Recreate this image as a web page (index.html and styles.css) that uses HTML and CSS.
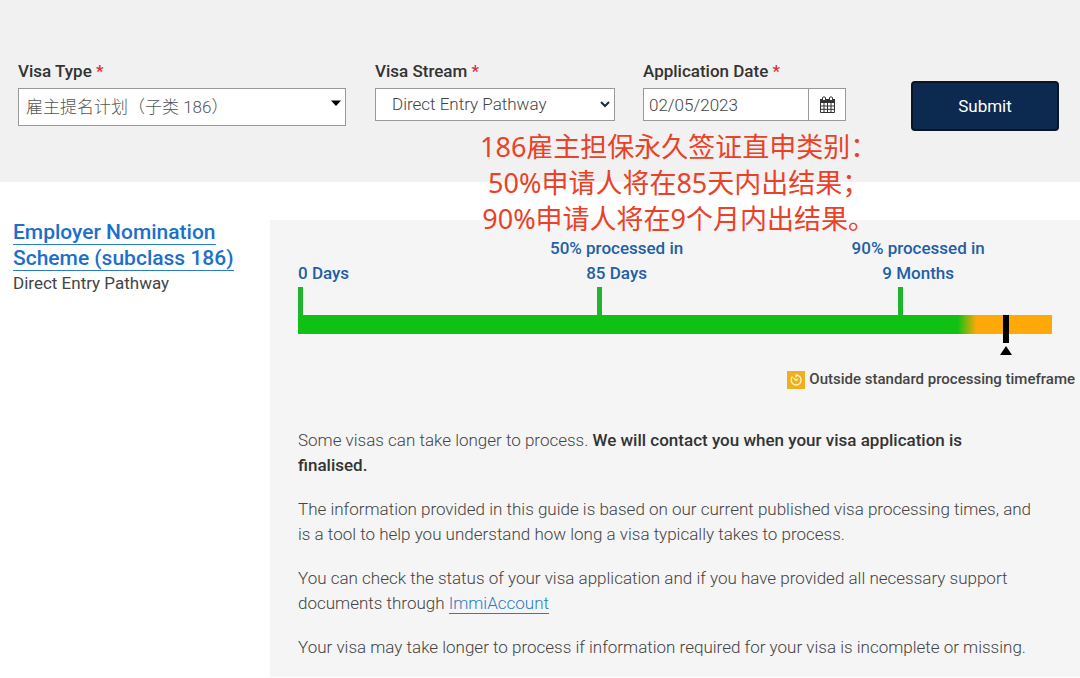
FILE: index.html
```html
<!DOCTYPE html>
<html lang="en">
<head>
  <meta charset="UTF-8" />
  <meta name="viewport" content="width=device-width, initial-scale=1.0"/>
  <title>Visa processing times</title>
  <link rel="stylesheet" href="styles.css">
</head>
<body>
  <!-- Search form -->
  <form class="search">
    <div class="field field-type">
      <label for="visaType">Visa Type <span class="required">*</span></label>
      <div class="type-box">
        <select id="visaType">
          <option>雇主提名计划（子类 186）</option>
        </select>
        <svg class="caret" viewBox="0 0 10 6" aria-hidden="true"><path d="M0 0.500h10L5 6z"/></svg>
      </div>
    </div>

    <div class="field field-stream">
      <label for="visaStream">Visa Stream <span class="required">*</span></label>
      <div class="stream-box">
        <select id="visaStream">
          <option>Direct Entry Pathway</option>
        </select>
        <svg class="chevron" viewBox="0 0 10 7" aria-hidden="true"><path d="M1 1l4 4 4-4"/></svg>
      </div>
    </div>

    <div class="field field-date">
      <label for="applicationDate">Application Date <span class="required">*</span></label>
      <div class="date-box">
        <input type="text" id="applicationDate" value="02/05/2023">
        <button type="button" class="calendar" aria-label="Choose date">
          <svg viewBox="0 0 17 18" aria-hidden="true">
            <path fill="#333" d="M1 3h15v4H1z"/>
            <path fill="none" stroke="#333" d="M1.500 3.500h14v13h-14zM5 7v9.500M8.500 7v9.500M12 7v9.500M1.500 10h14M1.500 13.300h14"/>
            <path fill="#fff" stroke="#333" d="M3.500 1.500q1.500-1.500 3 0v3h-3zM10.500 1.500q1.500-1.500 3 0v3h-3z"/>
          </svg>
        </button>
      </div>
    </div>

    <button type="submit" class="submit">Submit</button>

    <p class="note" lang="zh-CN">186雇主担保永久签证直申类别：<br>50%申请人将在85天内出结果；<br>90%申请人将在9个月内出结果。</p>
  </form>

  <!-- Result -->
  <main class="result">
    <div class="visa">
      <h2><a href="#">Employer Nomination Scheme (subclass 186)</a></h2>
      <p>Direct Entry Pathway</p>
    </div>

    <section class="panel">
      <div class="timeline">
        <div class="milestones">
          <div class="milestone start"><span class="when">0 Days</span></div>
          <div class="milestone"><span class="when">50% processed in<br>85 Days</span></div>
          <div class="milestone"><span class="when">90% processed in<br>9 Months</span></div>
        </div>
        <div class="bar">
          <div class="marker" style="left: 93.500%"></div>
        </div>
      </div>

      <div class="legend">
        <svg viewBox="0 0 18 18" aria-hidden="true">
          <path fill="#efb020" d="M0 0h18v18H0z"/>
          <path fill="none" stroke="#fff3c4" stroke-width="1.300" d="M5.500 5.500a5 5 0 1 0 3.500-1.500v2.500M6.500 7l2.500 2.500 2-1.500"/>
        </svg>
        Outside standard processing timeframe
      </div>

      <div class="info">
        <p>Some visas can take longer to process. <strong>We will contact you when your visa application is finalised.</strong></p>
        <p>The information provided in this guide is based on our current published visa processing times, and is a tool to help you understand how long a visa typically takes to process.</p>
        <p>You can check the status of your visa application and if you have provided all necessary support documents through <a href="#">ImmiAccount</a></p>
        <p>Your visa may take longer to process if information required for your visa is incomplete or missing.</p>
      </div>
    </section>
  </main>
</body>
</html>
```

FILE: styles.css
```css
* {
  box-sizing: border-box;
}

body {
  margin: 0;
  font-family: Roboto, "Noto Sans CJK SC", sans-serif;
  font-size: 17px;
  font-weight: 300;
  line-height: 25px;
  color: #444;
  background: #fff;
}

p, h2 {
  margin: 0;
}

/* Search form */
.search {
  position: relative;
  display: flex;
  align-items: flex-start;
  padding: 59px 21px 51px 18px;
  background: #f1f1f1;
}

.field label {
  display: block;
  margin-bottom: 4px;
  font-weight: 500;
  color: #333;
}

.required {
  color: #e0283c;
}

.field-type {
  flex: 328;
  margin-right: 29px;
}

.field-stream {
  flex: 240;
  margin-right: 28px;
}

.field-date {
  flex: 203;
  margin-right: 65px;
}

.type-box, .stream-box {
  position: relative;
}

select, input {
  width: 100%;
  height: 33px;
  font: inherit;
  color: #444;
  background: #fff;
  border: 1px solid #999;
  border-radius: 0;
  appearance: none;
}

.type-box select {
  height: 38px;
  padding: 0 24px 0 7px;
  color: #555;
}

.stream-box select {
  padding: 0 24px 0 16px;
}

.caret {
  position: absolute;
  top: 12px;
  right: 5px;
  width: 10px;
  height: 6px;
}

.chevron {
  position: absolute;
  top: 13px;
  right: 5px;
  width: 10px;
  height: 7px;
  fill: none;
  stroke: #1b2b3d;
  stroke-width: 2;
}

.date-box {
  display: flex;
}

.date-box input {
  flex: 1;
  min-width: 0;
  padding: 0 5px;
}

.calendar {
  display: flex;
  align-items: center;
  justify-content: center;
  width: 37px;
  padding: 0;
  background: #fff;
  border: 1px solid #999;
  border-left: 0;
}

.calendar svg {
  width: 17px;
  height: 18px;
}

.submit {
  flex: 0 0 148px;
  height: 50px;
  margin-top: 22px;
  font: inherit;
  font-weight: 400;
  color: #fff;
  background: #0c2a50;
  border: 2px solid #0a1626;
  border-radius: 4px;
}

/* Red note written over the page */
.note {
  position: absolute;
  top: 129px;
  left: 480px;
  font-family: "Noto Sans", "Noto Sans CJK SC", sans-serif;
  font-size: 27px;
  font-weight: 400;
  line-height: 36px;
  text-align: center;
  white-space: nowrap;
  color: #ea4128;
}

/* Result */
.result {
  display: flex;
  align-items: flex-start;
  padding: 38px 0 1px;
}

.visa {
  width: 25%;
  margin-top: -1px;
  padding: 0 13px;
}

.visa h2 {
  font-size: 21px;
  font-weight: 500;
  line-height: 26px;
}

.visa p {
  font-weight: 400;
}

a {
  color: #2a7ccb;
  text-decoration: none;
  border-bottom: 1px solid #2a7ccb;
}

.visa a {
  color: #1c6fca;
}

.panel {
  width: 75%;
  padding: 16px 0 17px 28px;
  background: #f5f5f5;
}

.timeline {
  margin-right: 28px;
}

.milestones {
  display: grid;
  grid-template-columns: 2fr 2fr 1fr;
}

.milestone {
  display: flex;
  flex-direction: column;
  justify-content: flex-end;
  min-width: 0;
}

.when {
  width: 138px;
  margin-left: -52px;
  font-weight: 500;
  text-align: center;
  white-space: nowrap;
  color: #1f5fa8;
}

.start .when {
  margin-left: 0;
  text-align: left;
}

.milestone::after {
  content: "";
  width: 5px;
  height: 28px;
  margin: 1px 0 0 -3px;
  background: #1fb52c;
}

.start::after {
  margin-left: 0;
}

.bar {
  position: relative;
  height: 19px;
  background: linear-gradient(to right, #0fc113 87.5%, #ffa908 90%);
}

.marker {
  position: absolute;
  top: 0;
  width: 6px;
  height: 28px;
  background: #000;
}

.marker::after {
  content: "";
  position: absolute;
  top: 31px;
  left: -3px;
  border: 6px solid transparent;
  border-top: 0;
  border-bottom: 9px solid #000;
}

.legend {
  display: flex;
  align-items: center;
  justify-content: flex-end;
  gap: 4px;
  margin-top: 33px;
  padding-right: 5px;
  font-size: 15px;
  font-weight: 500;
}

.legend svg {
  width: 18px;
  height: 18px;
}

.info {
  display: grid;
  gap: 19px;
  margin: 36px 46px 0 0;
}

strong {
  font-weight: 500;
  color: #333;
}
```
